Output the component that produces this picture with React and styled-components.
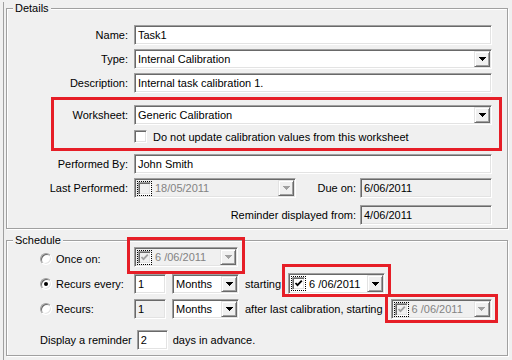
import React from "react";
import styled, { createGlobalStyle } from "styled-components";

const GlobalStyle = createGlobalStyle`
  html, body {
    margin: 0;
    padding: 0;
    background: #f0f0f0;
  }
  body {
    font-family: "Liberation Sans", Arial, sans-serif;
    font-size: 11px;
    color: #000;
  }
`;

const Page = styled.div`
  width: 512px;
  height: 360px;
  overflow: hidden;
  box-sizing: border-box;
  padding-left: 3px;
`;

const Frame = styled.div`
  height: 100%;
  border-left: 1px solid #a0a0a0;
  padding-left: 2px;
`;

const Group = styled.fieldset`
  box-sizing: border-box;
  width: 502px;
  min-width: 0;
  margin: ${(p) => p.$top}px 0 0;
  padding: ${(p) => p.$pad};
  border: 1px solid #a0a0a0;
  box-shadow: inset 1px 1px 0 #fff, 1px 1px 0 #fff;
`;

const Legend = styled.legend`
  margin-left: 6px;
  padding: 0 2px;
  line-height: 13px;
  background: #f0f0f0;
`;

const FormGrid = styled.div`
  display: grid;
  grid-template-columns: ${(p) => p.$label}px 358px;
  column-gap: 6px;
  row-gap: ${(p) => p.$gap}px;
  align-items: center;
`;

const Label = styled.div`
  text-align: right;
  white-space: nowrap;
  margin-top: ${(p) => p.$top || 0}px;
`;

const Field = styled.div`
  box-sizing: border-box;
  width: ${(p) => (p.$w ? `${p.$w}px` : "100%")};
  height: ${(p) => p.$h || 20}px;
  display: flex;
  align-items: center;
  padding: 1px;
  border: 1px solid;
  border-color: #a0a0a0 #fff #fff #a0a0a0;
  box-shadow: inset 1px 1px 0 #696969, inset -1px -1px 0 #e3e3e3;
  background: ${(p) => (p.$gray ? "#f0f0f0" : "#fff")};
  flex-shrink: 0;
  margin-top: ${(p) => p.$top || 0}px;
`;

const FieldText = styled.span`
  flex: 1;
  padding-left: ${(p) => p.$pad ?? 2}px;
  line-height: 16px;
  white-space: nowrap;
  overflow: hidden;
  color: ${(p) => (p.$disabled ? "#838383" : "#000")};
`;

const DropButton = styled.div`
  box-sizing: border-box;
  width: 16px;
  height: ${(p) => p.$h || 16}px;
  display: flex;
  align-items: center;
  justify-content: center;
  border: 1px solid;
  border-color: #e3e3e3 #696969 #696969 #e3e3e3;
  box-shadow: inset 1px 1px 0 #fff, inset -1px -1px 0 #a0a0a0;
  background: #f0f0f0;
  flex-shrink: 0;
`;

const Arrow = ({ disabled }) => (
  <svg width="7" height="4" shapeRendering="crispEdges">
    <g fill={disabled ? "#a0a0a0" : "#000"}>
      <rect x="0" y="0" width="7" height="1" />
      <rect x="1" y="1" width="5" height="1" />
      <rect x="2" y="2" width="3" height="1" />
      <rect x="3" y="3" width="1" height="1" />
    </g>
  </svg>
);

const Box = styled.span`
  box-sizing: border-box;
  width: 13px;
  height: 13px;
  display: inline-flex;
  align-items: center;
  justify-content: center;
  border: 1px solid;
  border-color: #a0a0a0 #fff #fff #a0a0a0;
  box-shadow: inset 1px 1px 0 #696969, inset -1px -1px 0 #e3e3e3;
  background: ${(p) => (p.$gray ? "#f0f0f0" : "#fff")};
  flex-shrink: 0;
`;

const FocusRing = styled.span`
  box-sizing: border-box;
  width: 15px;
  height: 15px;
  margin-left: 1px;
  display: inline-flex;
  align-items: center;
  justify-content: center;
  border: 1px dotted #000;
  flex-shrink: 0;
`;

const Check = ({ disabled }) => (
  <svg width="9" height="9" viewBox="0 0 9 9">
    <path
      d="M1.5 4 L3.5 6.2 L7.8 1.6"
      fill="none"
      stroke={disabled ? "#a0a0a0" : "#000"}
      strokeWidth="1.8"
    />
  </svg>
);

const CheckBox = ({ checked, gray, disabled }) => (
  <Box $gray={gray}>{checked && <Check disabled={disabled} />}</Box>
);

const TextBox = ({ value, w, gray, disabled, top }) => (
  <Field $w={w} $gray={gray} $top={top}>
    <FieldText $disabled={disabled}>{value}</FieldText>
  </Field>
);

const Combo = ({ value, w, gray }) => (
  <Field $w={w} $gray={gray}>
    <FieldText>{value}</FieldText>
    <DropButton>
      <Arrow />
    </DropButton>
  </Field>
);

const DatePicker = ({ value, w, checked, disabled, h }) => (
  <Field $w={w} $gray={disabled} $h={h}>
    <FocusRing>
      <CheckBox checked={checked} gray={disabled} disabled={disabled} />
    </FocusRing>
    <FieldText $pad={3} $disabled={disabled}>
      {value}
    </FieldText>
    <DropButton $h={h ? h - 4 : 16}>
      <Arrow disabled={disabled} />
    </DropButton>
  </Field>
);

const WorksheetBox = styled.div`
  grid-column: 1 / -1;
  margin: 0 -10px 0 44px;
  padding: 5px 7px 5px 0;
  border: 3px solid #e61e27;
`;

const InlineCheck = styled.div`
  grid-column: 2;
  display: flex;
  align-items: center;
  gap: 6px;
  height: 13px;
  margin-top: 1px;
`;

const SplitRow = styled.div`
  grid-column: 2;
  display: flex;
  align-items: center;
  margin-top: ${(p) => p.$top || 0}px;
`;

const SideLabel = styled.div`
  flex: 1;
  text-align: right;
  padding-right: 4px;
  white-space: nowrap;
`;

const ScheduleGrid = styled.div`
  display: grid;
  grid-template-columns: 88px 1fr;
  column-gap: 6px;
  align-items: center;
  padding-left: 33px;
`;

const RadioOption = styled.div`
  grid-column: 1;
  display: flex;
  align-items: center;
  gap: 4px;
  white-space: nowrap;
  margin-top: ${(p) => p.$top || 0}px;
  position: relative;
  top: ${(p) => p.$shift || 0}px;
`;

const RadioCircle = styled.span`
  box-sizing: border-box;
  width: 12px;
  height: 12px;
  border-radius: 50%;
  display: inline-flex;
  align-items: center;
  justify-content: center;
  border: 1px solid;
  border-color: #a0a0a0 #fff #fff #a0a0a0;
  box-shadow: inset 1px 1px 0 #696969, inset -1px -1px 0 #e3e3e3;
  background: #fff;

  &::after {
    content: "";
    display: ${(p) => (p.$on ? "block" : "none")};
    width: 4px;
    height: 4px;
    border-radius: 50%;
    background: #000;
  }
`;

const OptionFields = styled.div`
  grid-column: 2;
  display: flex;
  align-items: center;
  gap: 6px;
  margin-top: ${(p) => p.$top || 0}px;
  white-space: nowrap;
`;

const RedMark = styled.div`
  border: 3px solid #e61e27;
  padding: ${(p) => p.$pad};
  margin: ${(p) => p.$margin};
  flex-shrink: 0;
`;

const ReminderRow = styled.div`
  grid-column: 1 / -1;
  display: flex;
  align-items: center;
  gap: 5px;
  margin-top: 11px;
`;

export default function App() {
  return (
    <>
      <GlobalStyle />
      <Page>
        <Frame>
          <Group $top={2} $pad="10px 0 3px 0">
            <Legend>Details</Legend>
            <FormGrid $label={121} $gap={4}>
              <Label>Name:</Label>
              <TextBox value="Task1" />
              <Label>Type:</Label>
              <Combo value="Internal Calibration" />
              <Label>Description:</Label>
              <TextBox value="Internal task calibration 1." />
              <WorksheetBox>
                <FormGrid $label={74} $gap={4}>
                  <Label>Worksheet:</Label>
                  <Combo value="Generic Calibration" />
                  <InlineCheck>
                    <CheckBox />
                    <span>Do not update calibration values from this worksheet</span>
                  </InlineCheck>
                </FormGrid>
              </WorksheetBox>
              <Label $top={-1}>Performed By:</Label>
              <TextBox value="John Smith" top={-1} />
              <Label>Last Performed:</Label>
              <SplitRow>
                <DatePicker value="18/05/2011" w={162} disabled />
                <SideLabel>Due on:</SideLabel>
                <TextBox value="6/06/2011" w={132} gray />
              </SplitRow>
              <SplitRow $top={3}>
                <SideLabel>Reminder displayed from:</SideLabel>
                <TextBox value="4/06/2011" w={132} gray />
              </SplitRow>
            </FormGrid>
          </Group>

          <Group $top={5} $pad="0 0 5px 0">
            <Legend>Schedule</Legend>
            <ScheduleGrid>
              <RadioOption $shift={2}>
                <RadioCircle />
                <span>Once on:</span>
              </RadioOption>
              <OptionFields>
                <RedMark $pad="7px 4px 4px 4px" $margin="-10px 0 -7px -7px">
                  <DatePicker value="6 /06/2011" w={104} checked disabled />
                </RedMark>
              </OptionFields>

              <RadioOption $top={6}>
                <RadioCircle $on />
                <span>Recurs every:</span>
              </RadioOption>
              <OptionFields $top={6}>
                <TextBox value="1" w={32} />
                <Combo value="Months" w={67} />
                <span>starting</span>
                <RedMark $pad="6px 3px 0 3px" $margin="-9px 0 -3px -5px">
                  <DatePicker value="6 /06/2011" w={97} h={21} checked />
                </RedMark>
              </OptionFields>

              <RadioOption $top={5}>
                <RadioCircle />
                <span>Recurs:</span>
              </RadioOption>
              <OptionFields $top={5}>
                <TextBox value="1" w={32} gray />
                <Combo value="Months" w={67} />
                <span>after last calibration, starting</span>
                <RedMark $pad="2px 3px 1px 3px" $margin="-5px 0 -4px -4px">
                  <DatePicker value="6 /06/2011" w={101} checked disabled />
                </RedMark>
              </OptionFields>

              <ReminderRow>
                <span>Display a reminder</span>
                <TextBox value="2" w={31} />
                <span>days in advance.</span>
              </ReminderRow>
            </ScheduleGrid>
          </Group>
        </Frame>
      </Page>
    </>
  );
}
